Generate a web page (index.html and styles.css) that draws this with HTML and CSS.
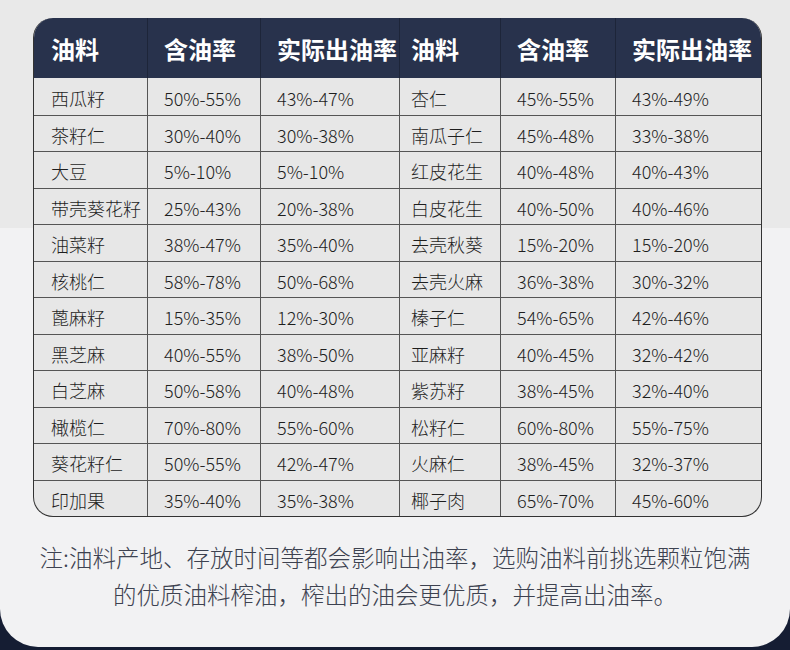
FILE: index.html
```html
<!DOCTYPE html>
<html lang="zh-CN">
<head>
<meta charset="utf-8">
<link rel="stylesheet" href="styles.css">
</head>
<body>
<div class="page">
  <div class="table">
    <div class="row head">
      <div class="c c1">油料</div><div class="c c2">含油率</div><div class="c c3">实际出油率</div>
      <div class="c c4">油料</div><div class="c c5">含油率</div><div class="c c6">实际出油率</div>
    </div>
    <div class="row"><div class="c c1">西瓜籽</div><div class="c c2">50%-55%</div><div class="c c3">43%-47%</div><div class="c c4">杏仁</div><div class="c c5">45%-55%</div><div class="c c6">43%-49%</div></div>
    <div class="row"><div class="c c1">茶籽仁</div><div class="c c2">30%-40%</div><div class="c c3">30%-38%</div><div class="c c4">南瓜子仁</div><div class="c c5">45%-48%</div><div class="c c6">33%-38%</div></div>
    <div class="row"><div class="c c1">大豆</div><div class="c c2">5%-10%</div><div class="c c3">5%-10%</div><div class="c c4">红皮花生</div><div class="c c5">40%-48%</div><div class="c c6">40%-43%</div></div>
    <div class="row"><div class="c c1">带壳葵花籽</div><div class="c c2">25%-43%</div><div class="c c3">20%-38%</div><div class="c c4">白皮花生</div><div class="c c5">40%-50%</div><div class="c c6">40%-46%</div></div>
    <div class="row"><div class="c c1">油菜籽</div><div class="c c2">38%-47%</div><div class="c c3">35%-40%</div><div class="c c4">去壳秋葵</div><div class="c c5">15%-20%</div><div class="c c6">15%-20%</div></div>
    <div class="row"><div class="c c1">核桃仁</div><div class="c c2">58%-78%</div><div class="c c3">50%-68%</div><div class="c c4">去壳火麻</div><div class="c c5">36%-38%</div><div class="c c6">30%-32%</div></div>
    <div class="row"><div class="c c1">蓖麻籽</div><div class="c c2">15%-35%</div><div class="c c3">12%-30%</div><div class="c c4">榛子仁</div><div class="c c5">54%-65%</div><div class="c c6">42%-46%</div></div>
    <div class="row"><div class="c c1">黑芝麻</div><div class="c c2">40%-55%</div><div class="c c3">38%-50%</div><div class="c c4">亚麻籽</div><div class="c c5">40%-45%</div><div class="c c6">32%-42%</div></div>
    <div class="row"><div class="c c1">白芝麻</div><div class="c c2">50%-58%</div><div class="c c3">40%-48%</div><div class="c c4">紫苏籽</div><div class="c c5">38%-45%</div><div class="c c6">32%-40%</div></div>
    <div class="row"><div class="c c1">橄榄仁</div><div class="c c2">70%-80%</div><div class="c c3">55%-60%</div><div class="c c4">松籽仁</div><div class="c c5">60%-80%</div><div class="c c6">55%-75%</div></div>
    <div class="row"><div class="c c1">葵花籽仁</div><div class="c c2">50%-55%</div><div class="c c3">42%-47%</div><div class="c c4">火麻仁</div><div class="c c5">38%-45%</div><div class="c c6">32%-37%</div></div>
    <div class="row"><div class="c c1">印加果</div><div class="c c2">35%-40%</div><div class="c c3">35%-38%</div><div class="c c4">椰子肉</div><div class="c c5">65%-70%</div><div class="c c6">45%-60%</div></div>
  </div>
  <p class="note">注:油料产地、存放时间等都会影响出油率，选购油料前挑选颗粒饱满<br>的优质油料榨油，榨出的油会更优质，并提高出油率。</p>
</div>
</body>
</html>
```
FILE: styles.css
```css
html, body {
  margin: 0;
  padding: 0;
}
body {
  background: #151d33;
  width: 790px;
  height: 650px;
  overflow: hidden;
  font-family: "Noto Sans CJK SC", "Noto Sans", sans-serif;
}
.page {
  height: 647px;
  box-sizing: border-box;
  padding-top: 18px;
  background: linear-gradient(#e9e9e9 0, #e9e9e9 228px, #f2f2f3 228px);
  border-radius: 0 0 38px 38px;
  overflow: hidden;
}
.table {
  margin-left: 33px;
  width: 729px;
  box-sizing: border-box;
  border: 1px solid #333;
  border-top: none;
  border-radius: 20px;
  overflow: hidden;
  background: #e7e7e7;
}
.row {
  display: grid;
  grid-template-columns: 113px 113px 139px 101px 115px 146px;
  height: 36.5px;
  border-top: 1px solid #555;
  box-sizing: border-box;
}
.row.head {
  height: 60px;
  border-top: none;
  background: #28324c;
}
.row.head + .row {
  border-top: none;
}
.c {
  display: flex;
  align-items: center;
  padding-left: 16px;
  padding-top: 3px;
  box-sizing: border-box;
  font-size: 18px;
  font-weight: 300;
  color: #1e1e1e;
  white-space: nowrap;
  border-left: 1px solid #555;
}
.c1 {
  border-left: none;
  padding-left: 17px;
}
.c4 {
  padding-left: 11px;
}
.head .c {
  font-size: 24px;
  font-weight: 700;
  color: #ffffff;
  padding-top: 0;
  border-left-color: #1d2539;
}
.note {
  margin: 22px 0 0;
  text-align: center;
  font-size: 23.5px;
  line-height: 37px;
  font-weight: 300;
  color: #3d4250;
}
```
